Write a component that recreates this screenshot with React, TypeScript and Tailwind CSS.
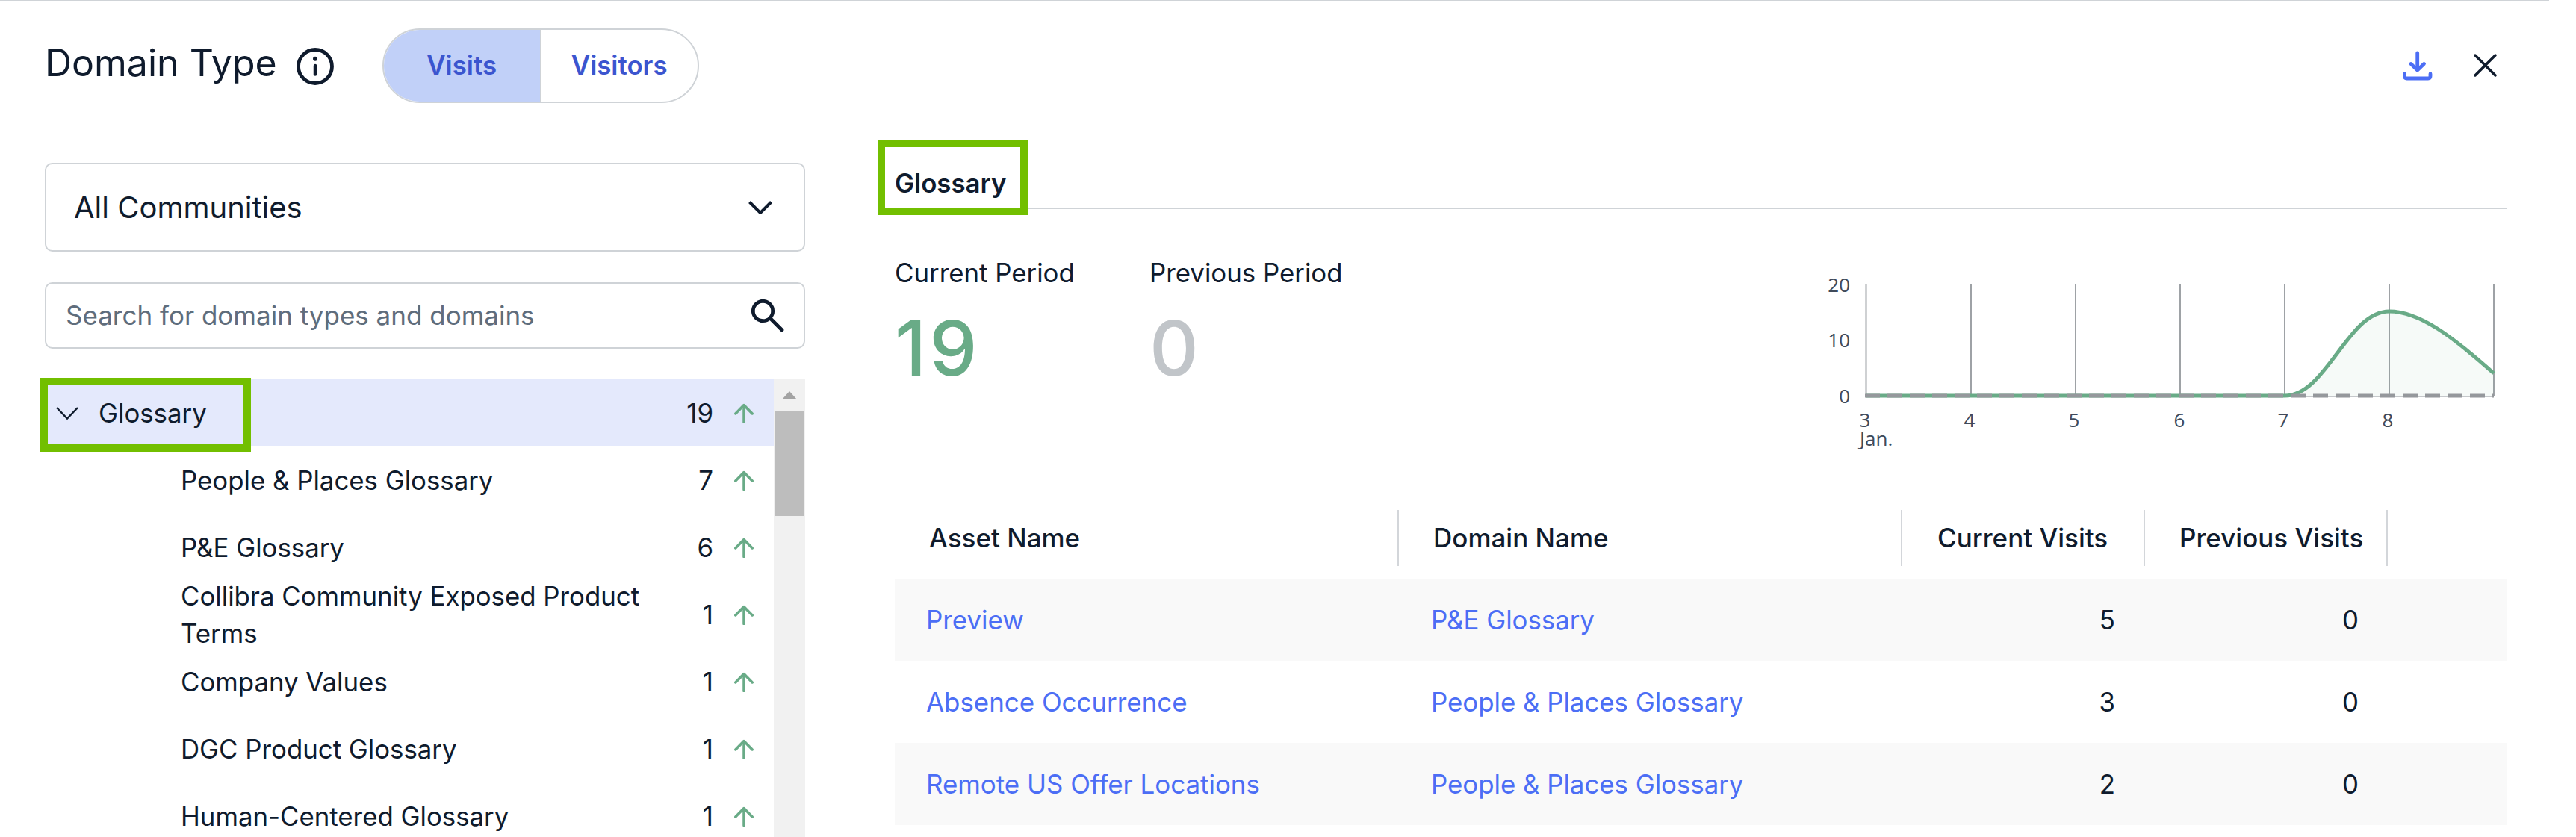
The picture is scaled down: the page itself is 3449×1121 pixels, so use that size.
import React from "react";

const subDomains = [
  { name: "People & Places Glossary", count: 7 },
  { name: "P&E Glossary", count: 6 },
  { name: "Collibra Community Exposed Product Terms", count: 1 },
  { name: "Company Values", count: 1 },
  { name: "DGC Product Glossary", count: 1 },
  { name: "Human-Centered Glossary", count: 1 },
];

const assets = [
  { asset: "Preview", domain: "P&E Glossary", current: 5, previous: 0 },
  { asset: "Absence Occurrence", domain: "People & Places Glossary", current: 3, previous: 0 },
  { asset: "Remote US Offer Locations", domain: "People & Places Glossary", current: 2, previous: 0 },
];

const UpArrow = () => (
  <svg width="26" height="27" viewBox="0 0 26 27" fill="none" stroke="#69ab87" strokeWidth="3.500" strokeLinecap="round" strokeLinejoin="round">
    <path d="M13 25.500V3M1.800 14L13 2.500L24.200 14" />
  </svg>
);

const TrendChart = () => {
  const gridX = [2498.5, 2639, 2779, 2919, 3059, 3199, 3339];
  const labels = [
    { x: 2637, text: "4" },
    { x: 2777, text: "5" },
    { x: 2918, text: "6" },
    { x: 3057, text: "7" },
    { x: 3197, text: "8" },
  ];
  return (
    <svg width="927" height="250" viewBox="2430 360 927 250" className="font-['Open_Sans',sans-serif]">
      {gridX.map((x) => (
        <line key={x} x1={x} x2={x} y1="380" y2="531" stroke="#9ea2a6" strokeWidth="2" />
      ))}
      <path d="M3059 530C3115 530 3143 417 3199 417C3240 417 3285 452 3339 500V530Z" fill="#69ab87" fillOpacity="0.06" />
      <line x1="2498" x2="3339" y1="531" y2="531" stroke="#c5c8cb" strokeWidth="2" />
      <path d="M2498 530H3059C3115 530 3143 417 3199 417C3240 417 3285 452 3339 500" fill="none" stroke="#69ab87" strokeWidth="5" />
      <line x1="2497" x2="3339" y1="530" y2="530" stroke="#95989c" strokeWidth="5" strokeDasharray="20 10" />
      <g fill="#404a5a" fontSize="26">
        <text x="2477" y="391" textAnchor="end">20</text>
        <text x="2477" y="465" textAnchor="end">10</text>
        <text x="2477" y="540" textAnchor="end">0</text>
        <text>
          <tspan x="2489.500" y="572">3</tspan>
          <tspan x="2490" y="597">Jan.</tspan>
        </text>
        {labels.map((l) => (
          <text key={l.text} x={l.x} y="572" textAnchor="middle">{l.text}</text>
        ))}
      </g>
    </svg>
  );
};

export default function App() {
  return (
    <div className="flex h-[1121px] w-[3449px] flex-col overflow-hidden bg-white font-['Inter',sans-serif] text-[34.8px] text-[#0f1b2d]">
      <div className="h-[2px] w-[3413px] bg-[#cfd3d7]" />

      <header className="flex h-[171px] items-center pl-[60px]">
        <h1 className="mb-[8px] text-[50px] font-normal leading-none">Domain Type</h1>
        <svg className="ml-[26px] mt-[2px]" width="50" height="50" viewBox="0 0 50 50" fill="none">
          <circle cx="25" cy="25" r="22.500" stroke="#0f1b2d" strokeWidth="4.800" />
          <circle cx="25" cy="14.700" r="3" fill="#0f1b2d" />
          <path d="M25 24V35.500" stroke="#0f1b2d" strokeWidth="4.500" strokeLinecap="round" />
        </svg>
        <div className="ml-[65px] flex h-[100px] w-[424px] overflow-hidden rounded-full border-2 border-[#cfd3d7] font-semibold text-[#3b55cf]">
          <div className="flex w-[211px] items-center justify-center border-r-2 border-[#cfd3d7] bg-[#c1d0f8]">Visits</div>
          <div className="flex flex-1 items-center justify-center">Visitors</div>
        </div>
        <div className="ml-auto mr-[106px] flex items-center gap-[55px]">
          <svg width="40" height="40" viewBox="0 0 40 40" fill="none" stroke="#4c6ef5" strokeWidth="4.800" strokeLinecap="round" strokeLinejoin="round">
            <path d="M19.700 3V26M11 17.500L19.700 26L28.500 17.500" />
            <path d="M2.500 31V34Q2.500 37 5.500 37H34Q37 37 37 34V31" />
          </svg>
          <svg width="31" height="31" viewBox="0 0 31 31" fill="none" stroke="#0f1b2d" strokeWidth="3.500" strokeLinecap="round">
            <path d="M2 2L29 29M29 2L2 29" />
          </svg>
        </div>
      </header>

      <div className="flex min-h-0 flex-1 pt-[45px]">
        {/* left column */}
        <aside className="ml-[60px] flex w-[1018px] flex-col">
          <div className="flex h-[119px] items-center justify-between rounded-[10px] border-2 border-[#cfd3d7] pl-[37px] pr-[42px] text-[40px]">
            <span>All Communities</span>
            <svg width="32" height="18" viewBox="0 0 32 18" fill="none" stroke="#0f1b2d" strokeWidth="4">
              <path d="M1.500 1.500L16 16L30.500 1.500" />
            </svg>
          </div>
          <div className="mt-[41px] flex h-[89px] items-center justify-between rounded-[10px] border-2 border-[#cfd3d7] pl-[26px] pr-[26px]">
            <span className="text-[35px] text-[#5f6d7c]">Search for domain types and domains</span>
            <svg width="44" height="44" viewBox="0 0 44 44" fill="none" stroke="#0f1b2d" strokeWidth="4.800" strokeLinecap="round">
              <circle cx="15.500" cy="15.500" r="13.200" />
              <path d="M25.500 25.500L41 41" />
            </svg>
          </div>

          <div className="relative mt-[41px] min-h-0 flex-1">
            <div className="flex h-full overflow-hidden">
              <ul className="w-[976px]">
                <li className="flex h-[90px] items-center bg-[#e4e9fc] pr-[27px]">
                  <svg className="ml-[15px]" width="30" height="17" viewBox="0 0 30 17" fill="none" stroke="#0f1b2d" strokeWidth="2.500">
                    <path d="M1 1L15 15.500L29 1" />
                  </svg>
                  <span className="ml-[27px] flex-1">Glossary</span>
                  <span className="mr-[28px]">19</span>
                  <UpArrow />
                </li>
                {subDomains.map((d) => (
                  <li key={d.name} className="flex h-[90px] shrink-0 items-center pl-[182px] pr-[27px]">
                    <span className="flex-1 pr-[40px] leading-[50px]">{d.name}</span>
                    <span className="mr-[28px]">{d.count}</span>
                    <UpArrow />
                  </li>
                ))}
              </ul>
              <div className="flex w-[42px] flex-col items-center bg-[#f1f1f1]">
                <svg className="mt-[16px]" width="20" height="11" viewBox="0 0 20 11">
                  <path d="M10 0L20 11H0Z" fill="#a3a3a3" />
                </svg>
                <div className="mt-[15px] h-[141px] w-[38px] bg-[#bdbdbd]" />
              </div>
            </div>
            {/* annotation box */}
            <div className="absolute left-[-6px] top-[-2px] h-[99px] w-[282px] border-[10px] border-[#72bf00]" />
          </div>
        </aside>

        {/* right column */}
        <main className="relative ml-[120px] flex w-[2159px] flex-col">
          <div className="flex h-[62px] shrink-0 items-start border-b-2 border-[#cfd3d7]">
            <span className="pt-[7px] font-semibold leading-[40px]">Glossary</span>
          </div>
          {/* annotation box */}
          <div className="absolute left-[-23px] top-[-31px] h-[101px] w-[201px] border-[10px] border-[#72bf00]" />

          <div className="flex h-[403px] shrink-0 justify-between">
            <div className="flex pt-[60px]">
              <div className="w-[341px]">
                <div className="leading-[50px]">Current Period</div>
                <div className="mt-[21px] text-[102px] font-medium leading-[110px] tracking-[4px] text-[#69ab87]">19</div>
              </div>
              <div>
                <div className="leading-[50px]">Previous Period</div>
                <div className="mt-[21px] text-[102px] font-medium leading-[110px] text-[#c1c5c9]">0</div>
              </div>
            </div>
            <div className="pt-[80px]">
              <TrendChart />
            </div>
          </div>

          <div className="grid h-[75px] shrink-0 grid-cols-[675px_674px_325px_325px_1fr] text-[35px] font-medium">
            <div className="flex items-center border-r-2 border-[#d3d6da] pl-[46px]">Asset Name</div>
            <div className="flex items-center border-r-2 border-[#d3d6da] pl-[46px]">Domain Name</div>
            <div className="flex items-center border-r-2 border-[#d3d6da] pl-[47px]">Current Visits</div>
            <div className="flex items-center border-r-2 border-[#d3d6da] pl-[46px]">Previous Visits</div>
          </div>
          <div className="mt-[17px]">
            {assets.map((row, i) => (
              <div
                key={row.asset}
                className={`grid h-[110px] grid-cols-[675px_674px_325px_325px_1fr] items-center ${i % 2 === 0 ? "bg-[#f9f9f9]" : "bg-white"}`}
              >
                <div className="pl-[42px] text-[34.9px] text-[#4c6ef5]">{row.asset}</div>
                <div className="pl-[43px] text-[#4c6ef5]">{row.domain}</div>
                <div className="pr-[40px] text-right">{row.current}</div>
                <div className="pr-[39px] text-right">{row.previous}</div>
              </div>
            ))}
          </div>
        </main>
      </div>
    </div>
  );
}
